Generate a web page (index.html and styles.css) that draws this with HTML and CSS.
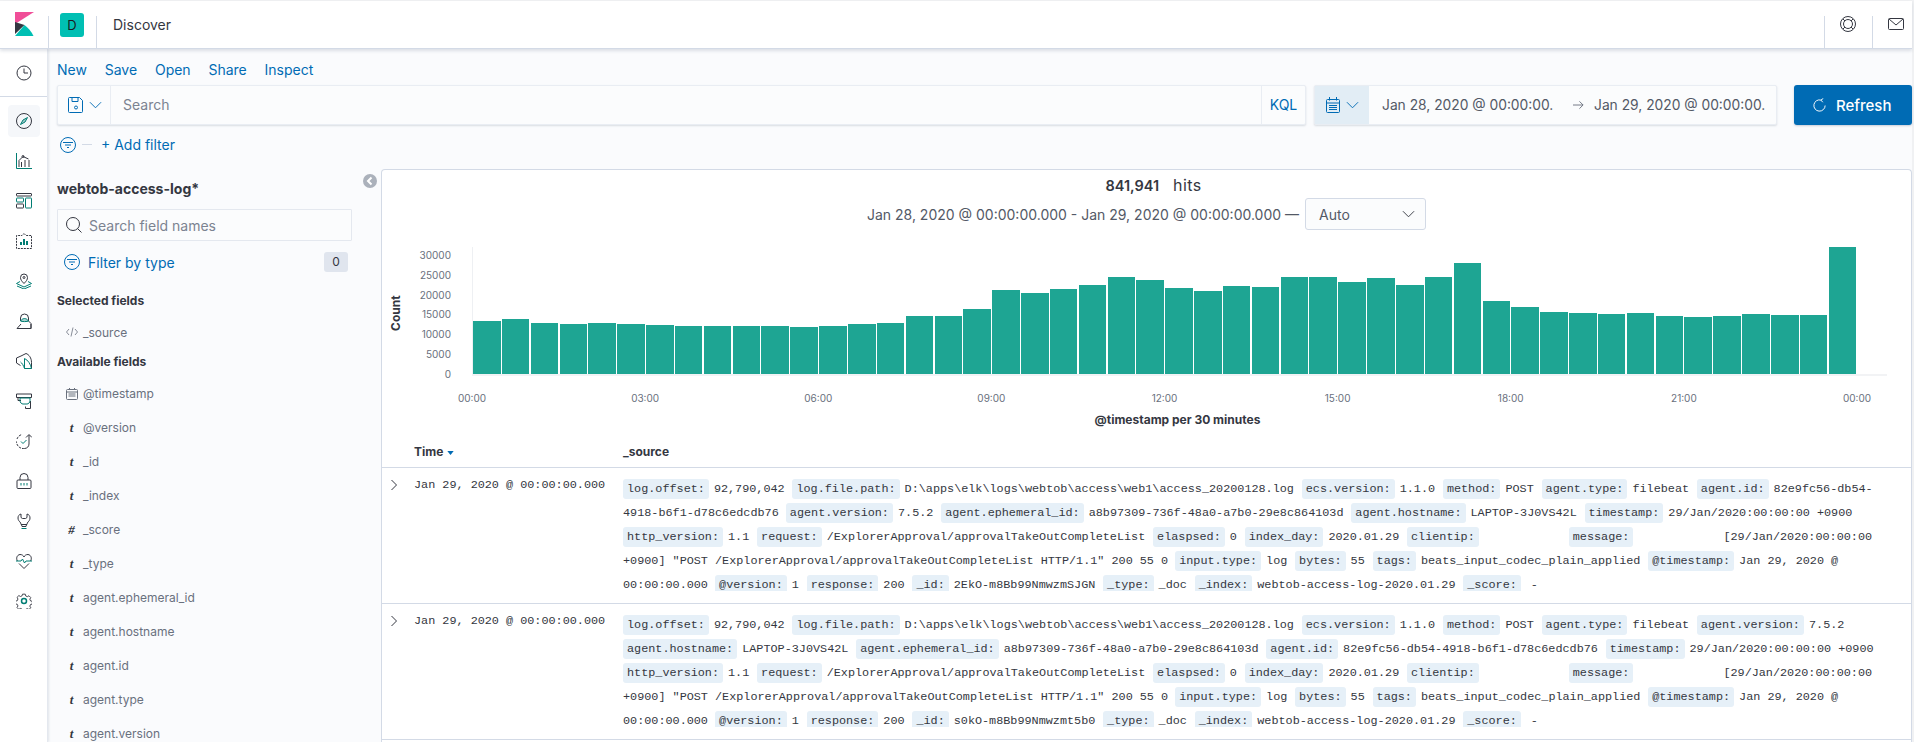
FILE: index.html
```html
<!DOCTYPE html>
<html lang="en">
<head>
<meta charset="utf-8">
<title>Discover - Kibana</title>
<link rel="stylesheet" href="styles.css">
</head>
<body>
<div class="page">
<header class="header">
  <div class="logo-cell">
    <svg width="19" height="24" viewBox="0 0 19 24"><path fill="#f04e98" d="M0 0h19L0 12z"/><path fill="#343741" d="M0 10l9.500 3L0 22z"/><path fill="#00bfb3" d="M0 24l9.500-11c3.500 2.500 7 6.500 9 11z"/></svg>
  </div>
  <div class="space-cell"><span class="badge">D</span></div>
  <div class="crumb">Discover</div>
  <div class="head-icon">
    <svg class="ic big" viewBox="0 0 16 16"><circle cx="8" cy="8" r="7.500"/><circle cx="8" cy="8" r="4.500"/><path d="M3 3l2 2M13 3l-2 2M3 13l2-2M13 13l-2-2"/></svg>
  </div>
  <div class="head-icon">
    <svg class="ic big" viewBox="0 0 16 16"><rect x=".5" y="2.500" width="15" height="11" rx="1"/><path d="M1 3l7 6 7-6"/></svg>
  </div>
</header>
<div class="main">
  <nav class="nav">
    <div class="nav-recent">
      <svg class="ic" viewBox="0 0 16 16"><circle cx="8" cy="8" r="7"/><path d="M8 3.500V8h4"/></svg>
    </div>
    <ul class="nav-list">
      <li class="nav-item active"><svg class="ic" viewBox="0 0 16 16"><circle cx="8" cy="8" r="7.500"/><path class="tf" d="M11.500 4.500L9 9 4.500 11.500 7 7z"/></svg></li>
      <li class="nav-item"><svg class="ic" viewBox="0 0 16 16"><path class="t" d="M.5 0v15.500H16"/><path d="M3 14V7.500l4-4 5.500 2.500M5.500 14V9M9 14V7M13 14V7"/><circle cx="7" cy="3.500" r="1"/></svg></li>
      <li class="nav-item"><svg class="ic" viewBox="0 0 16 16"><rect x=".5" y=".5" width="15" height="2.500" rx=".5"/><rect class="t" x="9.500" y="5" width="6" height="10" rx=".5"/><rect class="t" x=".5" y="5" width="7" height="4" rx=".5"/><rect x=".5" y="11" width="7" height="4" rx=".5"/></svg></li>
      <li class="nav-item"><svg class="ic" viewBox="0 0 16 16"><path d="M8 .5l2 2h5.500v13H.5v-13H6z" stroke-dasharray="2 1"/><path class="t" d="M5 12V9M8 12V6M11 12V8" stroke-width="2"/></svg></li>
      <li class="nav-item"><svg class="ic" viewBox="0 0 16 16"><path d="M8 10.500C5.500 8 4.500 6.500 4.500 4.500a3.500 3.500 0 017 0c0 2-1 3.500-3.500 6z"/><circle cx="8" cy="4.500" r="1"/><path class="t" d="M4 8.500L.5 10.500 8 14l7.500-3.500L12 8.500M1 13l7 3 7-3"/></svg></li>
      <li class="nav-item"><svg class="ic" viewBox="0 0 16 16"><path d="M4.500 8V5a4 4 0 018 0v3L15 10.500V15.500H1l4-4.500"/><path d="M15 11v4.500"/><path class="tf" d="M4.500 8c1-1.500 2.500-2.500 4-2.500S11.500 6.500 12.500 8c-1 .8-7 .8-8 0z"/></svg></li>
      <li class="nav-item"><svg class="ic" viewBox="0 0 16 16"><path d="M5 3L.5 5v5l4 2.500M5 3l5-2.500c3 1 5.500 4.500 5.500 9v6"/><path class="t" d="M8.500 5.500v10h7C14.500 11 12 7 8.500 5.500zM4.500 9c1.500 1 3 3.500 4 6.500"/></svg></li>
      <li class="nav-item"><svg class="ic" viewBox="0 0 16 16"><path d="M.5 1h15v3.500H.5zM2 4.500v3h3M14.500 8v7.500H9.500v-2"/><path class="t" d="M4 5h10v2.500c0 2-1.500 3.500-3 3.500H7c-1.500 0-3-1.500-3-3.500z"/></svg></li>
      <li class="nav-item"><svg class="ic" viewBox="0 0 16 16"><path d="M8.500 15.500A7 7 0 01.500 8.500M1 6a7 7 0 015-4.500" stroke-dasharray="2.500 1"/><path d="M13 2v9c0 2.500-2 4.500-4.500 4.500M10 4.500L13 1.500l3 3"/><path class="t" d="M5 8.500l2 2 3.500-3.500"/></svg></li>
      <li class="nav-item"><svg class="ic" viewBox="0 0 16 16"><path d="M4 7V4.500a4 4 0 018 0V7"/><rect x="1" y="7" width="14" height="8.500" rx="1"/><path class="t" d="M5 10v2.500M8 10v2.500M11 10v2.500"/></svg></li>
      <li class="nav-item"><svg class="ic" viewBox="0 0 16 16"><path d="M5 1C3 1.500 2 3 2 5c0 2 1 3 2 4 .5.500 1 1.500 1 2.500h6c0-1 .5-2 1-2.500 1-1 2-2 2-4 0-2-1-3.500-3-4v3.500L9.500 5.500h-3L5 4.500zM5.500 11.500l.5 2h4l.5-2"/><path class="t" d="M5.500 15.500h5"/></svg></li>
      <li class="nav-item"><svg class="ic" viewBox="0 0 16 16"><path d="M1.500 8C0 6 .5 2 4 1.500c2 0 3.500 1 4 2.500.5-1.500 2-2.500 4-2.500 3.500.5 4 4.500 2.500 6.500M3 10.500l5 5 5-5"/><path class="t" d="M0 8h5l1.500-2 2 4 1.500-2h6"/></svg></li>
      <li class="nav-item"><svg class="ic" viewBox="0 0 16 16"><path d="M6.500.5h3l.5 2 1.800.8 1.800-1 2 2-1 1.800.8 1.900 2 .5v3l-2 .5-.8 1.800 1 1.800-2 2-1.800-1-1.800.8-.5 1.800h-3l-.5-2-1.800-.8-1.800 1-2-2 1-1.800-.8-1.800-2-.5v-3l2-.5.8-1.900-1-1.800 2-2 1.800 1 1.800-.8z" transform="translate(.7 .7) scale(.9)"/><circle class="t" cx="8" cy="8" r="2.500" stroke-width="1.500"/></svg></li>
    </ul>
  </nav>
  <div class="app">
    <div class="top-links">
      <a class="top-link">New</a><a class="top-link">Save</a><a class="top-link">Open</a><a class="top-link">Share</a><a class="top-link">Inspect</a>
    </div>
    <div class="query-row">
      <div class="query">
        <div class="save-cell">
          <svg class="ic blue" viewBox="0 0 16 16"><path d="M1.500.5h10l3 3v11a1 1 0 01-1 1h-12a1 1 0 01-1-1V1.500a1 1 0 011-1zM4 .5v4h6v-4"/><circle cx="8" cy="10.500" r="1.500"/></svg>
          <svg class="ic blue small" viewBox="0 0 14 8"><path d="M1 1l6 6 6-6"/></svg>
        </div>
        <div class="query-text">Search</div>
        <div class="kql">KQL</div>
      </div>
      <div class="date">
        <div class="date-btn">
          <svg class="ic blue" viewBox="0 0 16 16"><rect x="1.500" y="2.500" width="13" height="13" rx="1"/><path d="M1.500 6h13M4.500 0v3.500M11.500 0v3.500M4 8.500h8M4 10.500h8M4 12.500h8" /></svg>
          <svg class="ic blue small" viewBox="0 0 14 8"><path d="M1 1l6 6 6-6"/></svg>
        </div>
        <div class="date-val">Jan 28, 2020 @ 00:00:00.</div>
        <svg class="arrow" viewBox="0 0 12 10"><path d="M0 5h11M7 1l4 4-4 4"/></svg>
        <div class="date-val">Jan 29, 2020 @ 00:00:00.</div>
      </div>
      <button class="refresh">
        <svg class="refresh-ic" viewBox="0 0 16 16"><path d="M9.500 2.200A6 6 0 1014 8M9.500 2.200L12 .5M9.500 2.200L11.500 4.500"/></svg>
        Refresh
      </button>
    </div>
    <div class="filter-row">
      <svg class="ic blue circ" viewBox="0 0 16 16"><circle cx="8" cy="8" r="7.500"/><path d="M3 5.500h10M5 8h6M7 10.500h2"/></svg>
      <span class="dash"></span>
      <a class="add-filter">+ Add filter</a>
    </div>
    <div class="workspace">
      <aside class="sidebar">
        <h2 class="index-title">webtob-access-log*</h2>
        <div class="field-search">
          <svg class="ic" viewBox="0 0 16 16"><circle cx="7" cy="7" r="6.500"/><path d="M11.500 11.500l4 4"/></svg>
          <span>Search field names</span>
        </div>
        <div class="type-filter">
          <svg class="ic blue" viewBox="0 0 16 16"><circle cx="8" cy="8" r="7.500"/><path d="M3 5.500h10M5 8h6M7 10.500h2"/></svg>
          <a class="type-label">Filter by type</a>
          <span class="count">0</span>
        </div>
        <h3 class="section">Selected fields</h3>
        <div class="field"><span class="ftype"><svg class="code" viewBox="0 0 12 10"><path d="M3 2L.5 5 3 8M9 2l2.500 3L9 8M7 .5L5 9.500"/></svg></span>_source</div>
        <h3 class="section avail">Available fields</h3>
        <div class="field"><span class="ftype"><svg class="cal" viewBox="0 0 12 12"><rect x=".5" y="1.500" width="11" height="10" rx="1"/><path d="M.5 4h11M3.500 0v2M8.500 0v2M2.500 6h7M2.500 8h7"/></svg></span>@timestamp</div>
        <div class="field"><span class="ftype">t</span>@version</div>
        <div class="field"><span class="ftype">t</span>_id</div>
        <div class="field"><span class="ftype">t</span>_index</div>
        <div class="field"><span class="ftype">#</span>_score</div>
        <div class="field"><span class="ftype">t</span>_type</div>
        <div class="field"><span class="ftype">t</span>agent.ephemeral_id</div>
        <div class="field"><span class="ftype">t</span>agent.hostname</div>
        <div class="field"><span class="ftype">t</span>agent.id</div>
        <div class="field"><span class="ftype">t</span>agent.type</div>
        <div class="field"><span class="ftype">t</span>agent.version</div>
        <span class="collapse"><svg viewBox="0 0 14 14"><path d="M8.500 3.500L5 7l3.500 3.500"/></svg></span>
      </aside>
      <section class="panel">
        <div class="hits"><strong>841,941</strong><span class="hits-label">hits</span></div>
        <div class="range">
          <span>Jan 28, 2020 @ 00:00:00.000 - Jan 29, 2020 @ 00:00:00.000 —</span>
          <span class="select">Auto<svg class="ic sel" viewBox="0 0 14 8"><path d="M1 1l6 6 6-6"/></svg></span>
        </div>
        <div class="chart">
          <div class="yaxis">
            <div class="ytitle">Count</div>
            <div class="yticks"><span>30000</span><span>25000</span><span>20000</span><span>15000</span><span>10000</span><span>5000</span><span>0</span></div>
          </div>
          <div class="plot">
            <i class="bar" style="height:53.3px"></i><i class="bar" style="height:54.7px"></i><i class="bar" style="height:50.7px"></i><i class="bar" style="height:49.7px"></i><i class="bar" style="height:50.7px"></i><i class="bar" style="height:50px"></i><i class="bar" style="height:49px"></i><i class="bar" style="height:48.3px"></i><i class="bar" style="height:48.3px"></i><i class="bar" style="height:48.3px"></i><i class="bar" style="height:48.3px"></i><i class="bar" style="height:47.3px"></i><i class="bar" style="height:48.3px"></i><i class="bar" style="height:50px"></i><i class="bar" style="height:50.7px"></i><i class="bar" style="height:58px"></i><i class="bar" style="height:58px"></i><i class="bar" style="height:64.7px"></i><i class="bar" style="height:84.3px"></i><i class="bar" style="height:81px"></i><i class="bar" style="height:85px"></i><i class="bar" style="height:89px"></i><i class="bar" style="height:97px"></i><i class="bar" style="height:94px"></i><i class="bar" style="height:86.3px"></i><i class="bar" style="height:83px"></i><i class="bar" style="height:87.7px"></i><i class="bar" style="height:86.7px"></i><i class="bar" style="height:97px"></i><i class="bar" style="height:97px"></i><i class="bar" style="height:91.7px"></i><i class="bar" style="height:95.7px"></i><i class="bar" style="height:88.7px"></i><i class="bar" style="height:97.3px"></i><i class="bar" style="height:111.3px"></i><i class="bar" style="height:72.7px"></i><i class="bar" style="height:67px"></i><i class="bar" style="height:62.3px"></i><i class="bar" style="height:61px"></i><i class="bar" style="height:59.7px"></i><i class="bar" style="height:61px"></i><i class="bar" style="height:58.3px"></i><i class="bar" style="height:57.3px"></i><i class="bar" style="height:58px"></i><i class="bar" style="height:59.7px"></i><i class="bar" style="height:59px"></i><i class="bar" style="height:59px"></i><i class="bar" style="height:127.3px"></i>
          </div>
          <div class="xticks"><span>00:00</span><span>03:00</span><span>06:00</span><span>09:00</span><span>12:00</span><span>15:00</span><span>18:00</span><span>21:00</span><span>00:00</span></div>
          <div class="xtitle">@timestamp per 30 minutes</div>
        </div>
        <div class="thead"><span class="th-time">Time<svg class="caret" viewBox="0 0 8 5"><path d="M0 0h8L4 5z"/></svg></span><span class="th-src">_source</span></div>
        <div class="row">
          <svg class="chev" viewBox="0 0 8 12"><path d="M1.500 1l5 5-5 5"/></svg>
          <div class="time">Jan 29, 2020 @ 00:00:00.000</div>
          <div class="src"><span class="k">log.offset:</span><span class="v">92,790,042</span> <span class="k">log.file.path:</span><span class="v">D:\apps\elk\logs\webtob\access\web1\access_20200128.log</span> <span class="k">ecs.version:</span><span class="v">1.1.0</span> <span class="k">method:</span><span class="v">POST</span> <span class="k">agent.type:</span><span class="v">filebeat</span> <span class="k">agent.id:</span><span class="v">82e9fc56-db54-</span><span>4918-b6f1-d78c6edcdb76</span> <span class="k">agent.version:</span><span class="v">7.5.2</span> <span class="k">agent.ephemeral_id:</span><span class="v">a8b97309-736f-48a0-a7b0-29e8c864103d</span> <span class="k">agent.hostname:</span><span class="v">LAPTOP-3J0VS42L</span> <span class="k">timestamp:</span><span class="v">29/Jan/2020:00:00:00 +0900</span> <span class="k">http_version:</span><span class="v">1.1</span> <span class="k">request:</span><span class="v">/ExplorerApproval/approvalTakeOutCompleteList</span> <span class="k">elaspsed:</span><span class="v">0</span> <span class="k">index_day:</span><span class="v">2020.01.29</span> <span class="k">clientip:</span><span class="blank"></span><span class="k">message:</span><span class="blank"></span><span class="v">[29/Jan/2020:00:00:00</span> <span>+0900] "POST /ExplorerApproval/approvalTakeOutCompleteList HTTP/1.1" 200 55 0</span> <span class="k">input.type:</span><span class="v">log</span> <span class="k">bytes:</span><span class="v">55</span> <span class="k">tags:</span><span class="v">beats_input_codec_plain_applied</span> <span class="k">@timestamp:</span><span class="v">Jan 29, 2020 @</span> <span>00:00:00.000</span> <span class="k">@version:</span><span class="v">1</span> <span class="k">response:</span><span class="v">200</span> <span class="k">_id:</span><span class="v">2EkO-m8Bb99NmwzmSJGN</span> <span class="k">_type:</span><span class="v">_doc</span> <span class="k">_index:</span><span class="v">webtob-access-log-2020.01.29</span> <span class="k">_score:</span><span class="v dashv">-</span></div>
        </div>
        <div class="row">
          <svg class="chev" viewBox="0 0 8 12"><path d="M1.500 1l5 5-5 5"/></svg>
          <div class="time">Jan 29, 2020 @ 00:00:00.000</div>
          <div class="src"><span class="k">log.offset:</span><span class="v">92,790,042</span> <span class="k">log.file.path:</span><span class="v">D:\apps\elk\logs\webtob\access\web1\access_20200128.log</span> <span class="k">ecs.version:</span><span class="v">1.1.0</span> <span class="k">method:</span><span class="v">POST</span> <span class="k">agent.type:</span><span class="v">filebeat</span> <span class="k">agent.version:</span><span class="v">7.5.2</span> <span class="k">agent.hostname:</span><span class="v">LAPTOP-3J0VS42L</span> <span class="k">agent.ephemeral_id:</span><span class="v">a8b97309-736f-48a0-a7b0-29e8c864103d</span> <span class="k">agent.id:</span><span class="v">82e9fc56-db54-4918-b6f1-d78c6edcdb76</span> <span class="k">timestamp:</span><span class="v">29/Jan/2020:00:00:00 +0900</span> <span class="k">http_version:</span><span class="v">1.1</span> <span class="k">request:</span><span class="v">/ExplorerApproval/approvalTakeOutCompleteList</span> <span class="k">elaspsed:</span><span class="v">0</span> <span class="k">index_day:</span><span class="v">2020.01.29</span> <span class="k">clientip:</span><span class="blank"></span><span class="k">message:</span><span class="blank"></span><span class="v">[29/Jan/2020:00:00:00</span> <span>+0900] "POST /ExplorerApproval/approvalTakeOutCompleteList HTTP/1.1" 200 55 0</span> <span class="k">input.type:</span><span class="v">log</span> <span class="k">bytes:</span><span class="v">55</span> <span class="k">tags:</span><span class="v">beats_input_codec_plain_applied</span> <span class="k">@timestamp:</span><span class="v">Jan 29, 2020 @</span> <span>00:00:00.000</span> <span class="k">@version:</span><span class="v">1</span> <span class="k">response:</span><span class="v">200</span> <span class="k">_id:</span><span class="v">s0kO-m8Bb99Nmwzmt5b0</span> <span class="k">_type:</span><span class="v">_doc</span> <span class="k">_index:</span><span class="v">webtob-access-log-2020.01.29</span> <span class="k">_score:</span><span class="v dashv">-</span></div>
        </div>
      </section>
    </div>
  </div>
</div>
</div>
</body>
</html>
```
FILE: styles.css
```css
* { box-sizing: border-box; }
html, body { margin: 0; height: 100%; overflow: hidden; }
body { background: #f0f1f3; font-family: Inter, "Noto Sans", sans-serif; color: #343741; font-size: 14px; }
.page { display: flex; flex-direction: column; height: 742px; width: 1912px; padding-top: 1px; }

.ic { width: 16px; height: 16px; fill: none; stroke: #343741; stroke-width: 1; flex: none; display: block; }
.ic .t { stroke: #017d73; }
.ic .tf { stroke: #017d73; fill: #017d73; fill-opacity: .35; }
.ic.blue { stroke: #006bb4; }
.ic.small { width: 13px; height: 8px; }

.header { height: 48px; flex: none; display: flex; background: #fff; border-bottom: 1px solid #d3dae6; box-shadow: 0 2px 3px rgba(152,162,179,.3); position: relative; z-index: 2; }
.logo-cell { width: 48px; display: flex; align-items: center; justify-content: center; }
.logo-cell svg { margin-top: -1px; }
.space-cell, .head-icon { position: relative; width: 48px; display: flex; align-items: center; justify-content: center; }
.space-cell::before, .head-icon::before { content: ""; position: absolute; left: 0; top: 15px; bottom: 0; width: 1px; background: #d3dae6; }
.head-icon { padding-bottom: 2px; }
.head-icon:last-child { width: 40px; justify-content: flex-start; padding-left: 16px; }
.space-cell::after { content: ""; position: absolute; right: -1px; top: 15px; bottom: 0; width: 1px; background: #d3dae6; }
.badge { width: 24px; height: 24px; border-radius: 3px; background: #00bfb3; color: #1a1c21; font-size: 13px; display: flex; align-items: center; justify-content: center; }
.crumb { flex: 1; padding-left: 17px; line-height: 47px; }
.head-icon .big { width: 16px; height: 16px; }

.main { flex: 1; display: flex; min-height: 0; }
.nav { width: 48px; flex: none; background: #fff; border-right: 1px solid #e4e8ef; box-shadow: 1px 0 2px rgba(152,162,179,.25); position: relative; z-index: 1; }
.nav-recent { height: 48px; display: flex; align-items: center; justify-content: center; border-bottom: 1px solid #d3dae6; }
.nav-list { list-style: none; margin: 0; padding: 4px 0 0; }
.nav-item { height: 40px; display: flex; align-items: center; justify-content: center; position: relative; }
.nav-item.active::before { content: ""; position: absolute; left: 8px; top: 4px; width: 32px; height: 32px; border-radius: 4px; background: #f5f7fa; }
.nav-item svg { position: relative; }

.app { flex: 1; min-width: 0; background: #fafbfd; display: flex; flex-direction: column; }
.top-links { height: 36px; flex: none; display: flex; align-items: center; padding: 4px 0 0 9px; gap: 17.800px; }
.top-link { color: #006bb4; }
.query-row { display: flex; height: 40px; flex: none; padding-left: 9px; }
.query { flex: 1; display: flex; align-items: stretch; background: #fbfcfd; border: 1px solid #e9edf3; box-shadow: 0 1px 2px rgba(152,162,179,.35); border-radius: 2px; }
.save-cell { width: 53px; display: flex; align-items: center; gap: 5px; padding-left: 10px; border-right: 1px solid #e9edf3; }
.query-text { flex: 1; color: #7b8391; padding-left: 12px; line-height: 38px; }
.kql { width: 44px; border-left: 1px solid #e9edf3; color: #006bb4; line-height: 38px; text-align: center; }
.date { width: 463px; margin-left: 8px; flex: none; display: flex; align-items: center; background: #fbfcfd; border: 1px solid #e9edf3; box-shadow: 0 1px 2px rgba(152,162,179,.35); border-radius: 2px; }
.date-btn { width: 54px; align-self: stretch; flex: none; background: #e2edf5; display: flex; align-items: center; gap: 5px; padding-left: 10px; }
.date-val { padding-left: 13px; width: 190px; white-space: nowrap; color: #535966; flex: none; font-size: 13.800px; }
.date-val + .arrow + .date-val { padding-left: 0; width: 180px; margin-left: 10px; }
.arrow { width: 11px; height: 10px; fill: none; stroke: #69707d; flex: none; margin-left: 14px; }
.refresh { width: 118px; margin-left: 17px; flex: none; border: 0; border-radius: 3px; background: #006bb4; color: #fff; font: 500 15px Inter, sans-serif; display: flex; align-items: center; gap: 9px; padding: 0 0 0 18px; box-shadow: 0 1px 2px rgba(152,162,179,.5); }
.refresh-ic { width: 15px; height: 15px; fill: none; stroke: #fff; flex: none; }
.filter-row { height: 44px; flex: none; display: flex; align-items: center; padding: 0 0 5px 12px; }
.dash { width: 10px; height: 1px; background: #d3dae6; margin: 0 9px 0 6px; }
.add-filter { color: #006bb4; }

.workspace { flex: 1; display: flex; min-height: 0; }
.sidebar { width: 333px; flex: none; padding: 0 0 0 9px; position: relative; overflow: hidden; }
.index-title { margin: 11px 0 11px; font-size: 14px; font-weight: 700; line-height: 18px; color: #343741; }
.field-search { width: 295px; height: 32px; display: flex; align-items: center; gap: 7px; padding-left: 8px; background: #fbfcfd; border: 1px solid #e4e8ef; border-radius: 1px; color: #7b8391; }
.type-filter { width: 295px; height: 20px; margin-top: 11px; display: flex; align-items: center; padding-left: 7px; }
.type-label { color: #006bb4; margin-left: 8px; flex: 1; }
.count { width: 24px; height: 20px; margin-right: 4px; background: #e0e5ee; border-radius: 3px; font-size: 12px; text-align: center; line-height: 20px; }
.section { margin: 20px 0 0; font-size: 12px; font-weight: 700; line-height: 18px; color: #343741; }
.section.avail { margin-top: 4px; }
.field { height: 34px; display: flex; align-items: center; font-size: 12px; color: #69707d; }
.section + .field { margin-top: 5px; }
.section.avail + .field { margin-top: 5.500px; }
.ftype { width: 26px; padding-left: 3px; text-align: center; flex: none; font: italic 700 13px "Liberation Serif", serif; color: #343741; display: flex; justify-content: center; }
.code { width: 12px; height: 10px; fill: none; stroke: #69707d; stroke-width: .8; }
.cal { width: 12px; height: 12px; fill: none; stroke: #69707d; }
.collapse { position: absolute; right: 4px; top: 5px; width: 14px; height: 14px; border-radius: 50%; background: #abb1bb; }
.collapse svg { display: block; width: 14px; height: 14px; fill: none; stroke: #fff; stroke-width: 2; }

.panel { flex: 1; min-width: 0; background: #fff; border: 1px solid #d3dae6; border-bottom: 0; border-radius: 4px 4px 0 0; }
.hits { height: 28px; padding-top: 5px; line-height: 20px; display: flex; justify-content: center; align-items: baseline; gap: 14px; padding-left: 14px; }
.hits strong { font-size: 14.500px; font-weight: 600; }
.hits-label { font-size: 16px; letter-spacing: .4px; }
.range { height: 32px; display: flex; justify-content: center; align-items: center; gap: 6px; color: #535966; }
.select { width: 121px; height: 32px; border: 1px solid #d3dae6; border-radius: 3px; background: #fbfcfd; display: flex; justify-content: space-between; align-items: center; padding: 0 10px 0 13px; color: #535966; }
.ic.sel { width: 13px; height: 8px; }
.chart { display: grid; grid-template-columns: 90px 1415px; padding-top: 17px; }
.yaxis { display: flex; height: 132px; }
.ytitle { width: 28px; writing-mode: vertical-rl; transform: rotate(180deg); text-align: center; font-size: 12px; font-weight: 700; color: #343741; line-height: 28px; height: 133px; }
.yticks { width: 41px; height: 131px; margin-top: 2px; display: flex; flex-direction: column; justify-content: space-between; align-items: flex-end; font-size: 10px; line-height: 12px; color: #69707d; }
.plot { height: 127px; display: flex; align-items: flex-end; padding-right: 29.500px; border-left: 1px solid #eef0f3; box-shadow: 0 2px 0 #f2f3f5; }
.bar { flex: 1; background: #1ea593; margin-right: 1.300px; display: block; }
.xticks { grid-column: 2; display: flex; justify-content: space-between; width: 1425px; margin: 13px 0 0 -20px; font-size: 10px; line-height: 12px; color: #69707d; }
.xticks span { width: 40px; text-align: center; }
.xtitle { grid-column: 2; text-align: center; margin: 9px 0 0 -4px; font-size: 12px; font-weight: 700; line-height: 14px; color: #343741; }
.thead { height: 41px; display: flex; align-items: center; padding-top: 9px; font-size: 12px; font-weight: 700; border-bottom: 1px solid #d3dae6; }
.th-time { width: 209px; margin-left: 32px; display: flex; align-items: center; gap: 4px; }
.caret { width: 7px; height: 4px; fill: #006bb4; margin-top: 2px; }
.row { height: 136px; display: flex; align-items: flex-start; border-bottom: 1px solid #d3dae6; font-family: "Liberation Mono", monospace; font-size: 11.800px; }
.chev { width: 8px; height: 12px; fill: none; stroke: #343741; margin: 11px 0 0 8px; flex: none; }
.time { width: 209px; margin: 10px 0 0 16px; flex: none; line-height: 14px; white-space: nowrap; }
.src { width: 1267px; flex: none; margin-top: 9px; line-height: 24px; max-height: 114px; overflow: hidden; }
.k { background: #e6f0f8; border-radius: 3px; padding: 3px 4px; margin-right: 5px; }
.v { margin-right: .7px; }
.dashv { margin-left: 5px; }
.blank { display: inline-block; width: 85px; }
```
